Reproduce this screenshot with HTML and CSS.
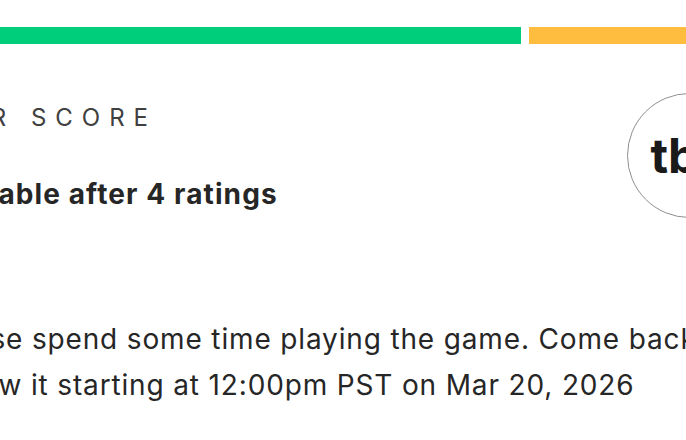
FILE: index.html
```html
<!DOCTYPE html>
<html lang="en">
<head>
<meta charset="utf-8">
<title>User Score</title>
<link rel="stylesheet" href="styles.css">
</head>
<body>
<div class="panel">
  <div class="score-bars">
    <div class="bar bar-green"></div>
    <div class="bar bar-yellow"></div>
  </div>
  <div class="score-head">
    <div class="score-info">
      <div class="score-title">User Score</div>
      <div class="score-status">Available after 4 ratings</div>
    </div>
    <div class="score-badge"><span>tbd</span></div>
  </div>
  <p class="score-note">Please spend some time playing the game. Come back to<br>review it starting at 12:00pm PST on Mar 20, 2026</p>
</div>
</body>
</html>
```

FILE: styles.css
```css
html, body {
  margin: 0;
  padding: 0;
  background: #ffffff;
  overflow: hidden;
}

body {
  width: 686px;
  height: 440px;
  font-family: "Inter", "Liberation Sans", sans-serif;
  color: #262626;
}

.panel {
  margin-left: -60px;
  width: 900px;
  padding-top: 27px;
}

.score-bars {
  display: flex;
  gap: 8px;
  height: 17px;
}

.bar-green {
  width: 581px;
  background: #00ce7a;
}

.bar-yellow {
  flex: 1;
  background: #ffbd3f;
}

.score-head {
  display: flex;
  justify-content: space-between;
  align-items: flex-start;
  margin-top: 49px;
  width: 812px;
}

.score-info {
  display: flex;
  flex-direction: column;
  padding-top: 10px;
}

.score-title {
  margin-left: -24px;
  font-size: 24px;
  text-transform: uppercase;
  letter-spacing: 9px;
  color: #404040;
  line-height: 30px;
}

.score-status {
  margin-top: 44px;
  margin-left: -14px;
  font-size: 28px;
  font-weight: 700;
  letter-spacing: 1.1px;
  line-height: 34px;
}

.score-badge {
  width: 123px;
  height: 123px;
  border: 1px solid #8f8f8f;
  border-radius: 50%;
  display: flex;
  align-items: center;
  justify-content: center;
}

.score-badge span {
  font-size: 48px;
  font-weight: 700;
  color: #1a1a1a;
}

.score-note {
  margin: 98px 0 0 -10px;
  font-size: 28px;
  letter-spacing: 0.85px;
  line-height: 46px;
}
```
